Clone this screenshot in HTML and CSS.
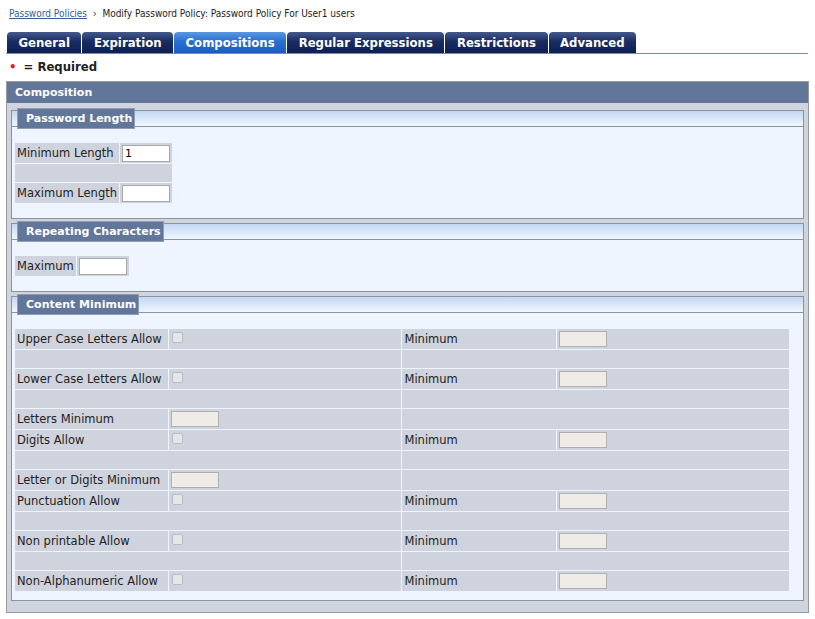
FILE: index.html
```html
<!DOCTYPE html>
<html lang="en">

<head>
    <meta charset="UTF-8">
    <title>Modify Password Policy</title>
    <link rel="stylesheet" href="styles.css">
</head>

<body>

    <div class="crumbs">
        <a href="#">Password Policies</a>
        <span class="sep">&rsaquo;</span>
        Modify Password Policy: Password Policy For User1 users
    </div>

    <div class="tabbar">
        <ul class="tabs">
            <li><a href="#">General</a></li>
            <li><a href="#">Expiration</a></li>
            <li class="active"><a href="#">Compositions</a></li>
            <li><a href="#">Regular Expressions</a></li>
            <li><a href="#">Restrictions</a></li>
            <li><a href="#">Advanced</a></li>
        </ul>
    </div>

    <div class="required"><span class="dot">&bull;</span> = Required</div>

    <div class="panel">
        <div class="panel-head">Composition</div>
        <div class="panel-body">

            <div class="group">
                <div class="group-head"><span class="legend">Password Length</span></div>
                <div class="group-body">
                    <table class="form">
                        <tr>
                            <td class="label">Minimum Length</td>
                            <td><input type="text" class="field" value="1"></td>
                        </tr>
                        <tr class="gap">
                            <td colspan="2"></td>
                        </tr>
                        <tr>
                            <td class="label">Maximum Length</td>
                            <td><input type="text" class="field"></td>
                        </tr>
                    </table>
                </div>
            </div>

            <div class="group">
                <div class="group-head"><span class="legend">Repeating Characters</span></div>
                <div class="group-body">
                    <table class="form">
                        <tr>
                            <td class="label">Maximum</td>
                            <td><input type="text" class="field"></td>
                        </tr>
                    </table>
                </div>
            </div>

            <div class="group">
                <div class="group-head"><span class="legend">Content Minimum</span></div>
                <div class="group-body last">
                    <table class="form wide">
                        <colgroup>
                            <col class="c-label">
                            <col class="c-value">
                            <col class="c-label">
                            <col class="c-value">
                        </colgroup>
                        <tr>
                            <td class="label">Upper Case Letters Allow</td>
                            <td><input type="checkbox" disabled></td>
                            <td class="label">Minimum</td>
                            <td><input type="text" class="field" disabled></td>
                        </tr>
                        <tr class="gap">
                            <td colspan="2"></td>
                            <td colspan="2"></td>
                        </tr>
                        <tr>
                            <td class="label">Lower Case Letters Allow</td>
                            <td><input type="checkbox" disabled></td>
                            <td class="label">Minimum</td>
                            <td><input type="text" class="field" disabled></td>
                        </tr>
                        <tr class="gap">
                            <td colspan="2"></td>
                            <td colspan="2"></td>
                        </tr>
                        <tr>
                            <td class="label">Letters Minimum</td>
                            <td><input type="text" class="field" disabled></td>
                            <td colspan="2"></td>
                        </tr>
                        <tr>
                            <td class="label">Digits Allow</td>
                            <td><input type="checkbox" disabled></td>
                            <td class="label">Minimum</td>
                            <td><input type="text" class="field" disabled></td>
                        </tr>
                        <tr class="gap">
                            <td colspan="2"></td>
                            <td colspan="2"></td>
                        </tr>
                        <tr>
                            <td class="label">Letter or Digits Minimum</td>
                            <td><input type="text" class="field" disabled></td>
                            <td colspan="2"></td>
                        </tr>
                        <tr>
                            <td class="label">Punctuation Allow</td>
                            <td><input type="checkbox" disabled></td>
                            <td class="label">Minimum</td>
                            <td><input type="text" class="field" disabled></td>
                        </tr>
                        <tr class="gap">
                            <td colspan="2"></td>
                            <td colspan="2"></td>
                        </tr>
                        <tr>
                            <td class="label">Non printable Allow</td>
                            <td><input type="checkbox" disabled></td>
                            <td class="label">Minimum</td>
                            <td><input type="text" class="field" disabled></td>
                        </tr>
                        <tr class="gap">
                            <td colspan="2"></td>
                            <td colspan="2"></td>
                        </tr>
                        <tr>
                            <td class="label">Non-Alphanumeric Allow</td>
                            <td><input type="checkbox" disabled></td>
                            <td class="label">Minimum</td>
                            <td><input type="text" class="field" disabled></td>
                        </tr>
                    </table>
                </div>
            </div>

        </div>
    </div>

</body>

</html>
```

FILE: styles.css
```css
body {
    font-family: 'DejaVu Sans', Verdana, Tahoma, sans-serif;
    font-size: 11.5px;
    color: #222222;
    margin: 0;
    padding: 0 6px 0 6px;
    background: #ffffff;
}

/* breadcrumb */
.crumbs {
    font-family: 'DejaVu Sans Condensed', 'DejaVu Sans', sans-serif;
    font-size: 10px;
    color: #222222;
    padding: 8px 0 0 3px;
    height: 17px;
}

.crumbs a {
    color: #3a5a9a;
}

.crumbs .sep {
    margin: 0 3px;
}

/* tabs */
.tabbar {
    margin-top: 7px;
    border-bottom: 1px solid #7a8bb0;
    margin-right: 1px;
}

.tabs {
    list-style: none;
    margin: 0;
    padding: 0 0 0 1px;
    display: flex;
}

.tabs li {
    margin-right: 1px;
}

.tabs li a {
    display: block;
    height: 21px;
    line-height: 21px;
    padding: 0 11.5px;
    font-family: 'DejaVu Sans Condensed', 'DejaVu Sans', sans-serif;
    font-weight: bold;
    font-size: 13px;
    color: #ffffff;
    text-decoration: none;
    border-radius: 4px 4px 0 0;
    background: linear-gradient(#44598c, #1a2d62 45%, #0c1e52);
}

.tabs li.active a {
    background: linear-gradient(#5a98e0, #2a6fd0 45%, #1a5cc4);
}

.required {
    font-family: 'DejaVu Sans Condensed', 'DejaVu Sans', sans-serif;
    font-weight: bold;
    font-size: 13px;
    padding: 5px 0 0 3px;
    height: 22px;
}

.required .dot {
    color: #e02020;
    margin-right: 3px;
}

/* composition panel */
.panel {
    border: 1px solid #9a9a9a;
    background: #d0d4de;
}

.panel-head {
    background: #62769a;
    color: #ffffff;
    font-weight: bold;
    font-size: 11px;
    height: 21px;
    line-height: 21px;
    padding-left: 8px;
}

.panel-body {
    padding: 7px 4px 11px 4px;
}

.group {
    border: 1px solid #8c939c;
    background: #eef5fe;
    margin-bottom: 4px;
}

.group:last-child {
    margin-bottom: 0;
}

.group-head {
    height: 15px;
    border-bottom: 1px solid #8c939c;
    background: linear-gradient(#c3d7f1, #eef7ff);
    padding-left: 5px;
}

.legend {
    display: inline-block;
    margin-top: -4px;
    height: 19px;
    line-height: 19px;
    padding: 0 2px 0 8px;
    background: #62769a;
    border: 1px solid #8e9cb6;
    color: #ffffff;
    font-weight: bold;
    font-size: 11px;
}

.group-body {
    padding: 15px 3px 14px 2px;
}

.group-body.last {
    padding-bottom: 8px;
}

/* form tables */
.form {
    border-collapse: separate;
    border-spacing: 1px;
}

.form td {
    background: #cfd3dd;
    height: 20px;
    padding: 0 2px;
    vertical-align: middle;
    white-space: nowrap;
}

.form tr.gap td {
    height: 18px;
}

.form.wide {
    width: 776px;
}

.c-label {
    width: 150px;
}

.c-value {
    width: 227px;
}

.field {
    width: 48px;
    height: 17px;
    box-sizing: border-box;
    border: 1px solid #a9a9a9;
    font-family: 'DejaVu Sans', Verdana, sans-serif;
    font-size: 11px;
    padding: 0 2px;
    margin: 0;
    background: #ffffff;
    display: block;
}

.field:disabled {
    background: #efece8;
    border-color: #b0b0b0;
    height: 16px;
}

input[type="checkbox"] {
    appearance: none;
    width: 11px;
    height: 11px;
    margin: 0 0 4px 1px;
    border: 1px solid #b8bcc4;
    border-radius: 2px;
    background: #e4e6ea;
    display: block;
}
```
